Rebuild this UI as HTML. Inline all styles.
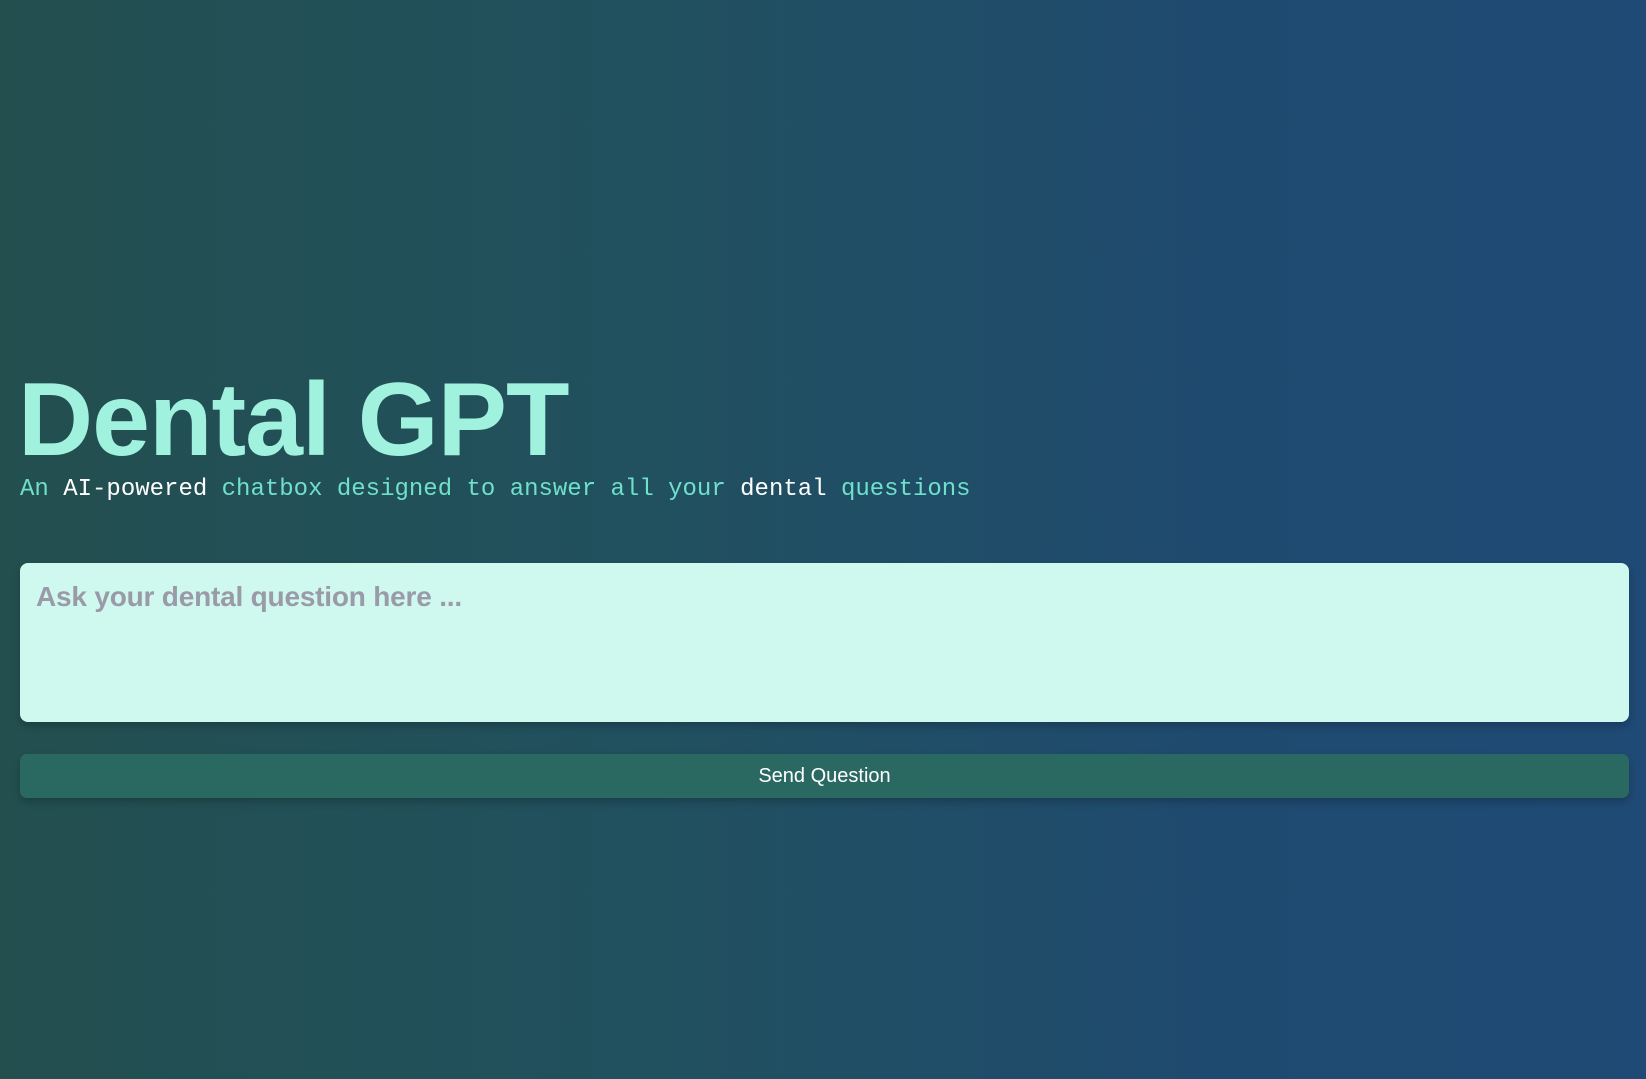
<!DOCTYPE html>
<html><head><meta charset="utf-8"><style>
html,body{margin:0;height:100%;}
body{width:1646px;height:1079px;background:linear-gradient(90deg,#234f4f 0%,#21505f 40%,#1f4a70 75%,#1f4a75 100%);font-family:"Liberation Sans",sans-serif;position:relative;overflow:hidden;}
h1{position:absolute;left:18px;top:360px;margin:0;font-size:104px;font-weight:bold;color:#a0f1de;letter-spacing:-1px;line-height:120px;}
.sub{position:absolute;left:20px;top:476px;font-family:"Liberation Mono",monospace;font-size:24px;color:#6fe0cb;white-space:pre;}
.sub b{font-weight:normal;color:#fff;}
.ta{position:absolute;left:20px;top:563px;width:1609px;height:159px;background:#cff8ee;border-radius:8px;box-shadow:0 4px 8px rgba(0,0,0,.2);}
.ta span{position:absolute;left:16px;top:18px;font-size:28px;font-weight:bold;color:#9a9aa8;letter-spacing:-0.2px;}
.btn{position:absolute;left:20px;top:754px;width:1609px;height:44px;background:#2a6962;border-radius:7px;color:#fff;font-size:20px;text-align:center;line-height:44px;box-shadow:0 4px 8px rgba(0,0,0,.2);}
</style></head><body>
<h1>Dental GPT</h1>
<div class="sub">An <b>AI-powered</b> chatbox designed to answer all your <b>dental</b> questions</div>
<div class="ta"><span>Ask your dental question here ...</span></div>
<div class="btn">Send Question</div>
</body></html>
